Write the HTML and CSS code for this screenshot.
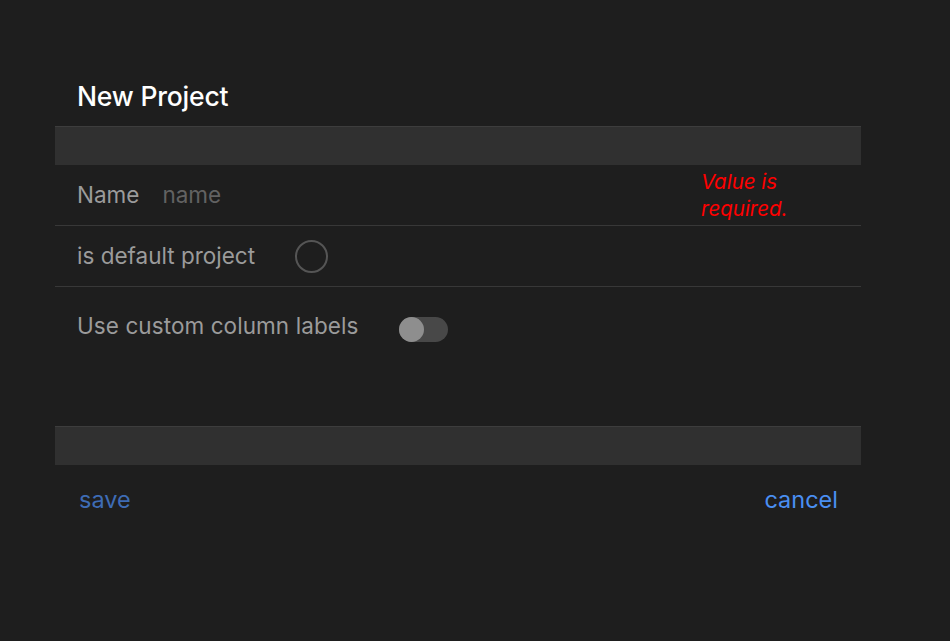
FILE: index.html
```html
<!DOCTYPE html>
<html>
<head>
<meta charset="utf-8">
<link rel="stylesheet" href="styles.css">
</head>
<body>
<div class="dialog">
  <h1 class="title">New Project</h1>
  <div class="bar"></div>
  <div class="row row-name">
    <span class="label">Name</span>
    <span class="placeholder">name</span>
    <span class="error">Value is<br>required.</span>
  </div>
  <div class="row">
    <span class="label">is default project</span>
    <span class="radio"></span>
  </div>
  <div class="row row-last">
    <span class="label">Use custom column labels</span>
    <span class="toggle"><span class="knob"></span></span>
  </div>
  <div class="bar"></div>
  <div class="actions">
    <span class="save">save</span>
    <span class="cancel">cancel</span>
  </div>
</div>
</body>
</html>
```
FILE: styles.css
```css
html, body {
  margin: 0;
  padding: 0;
  background: #1e1e1e;
  height: 100%;
}
body {
  font-family: Inter, "Liberation Sans", Arial, sans-serif;
}
.dialog {
  width: 806px;
  margin-left: 55px;
  padding-top: 79px;
}
.title {
  margin: 0;
  padding-left: 22px;
  height: 47px;
  font-size: 26.5px;
  font-weight: 500;
  color: #ffffff;
  line-height: 34px;
  letter-spacing: -0.2px;
}
.bar {
  height: 38px;
  background: #303030;
  border-top: 1px solid #3d3d3d;
}
.row {
  height: 60px;
  border-bottom: 1px solid #383838;
  display: flex;
  align-items: center;
  padding-left: 22px;
  position: relative;
}
.label {
  font-size: 22.5px;
  color: #9b9b9b;
  line-height: 26px;
}
.row-name .placeholder {
  margin-left: 23px;
  font-size: 22.5px;
  color: #626262;
  line-height: 26px;
}
.row-name .error {
  margin-left: auto;
  margin-right: 60px;
  width: 100px;
  color: #ff0000;
  font-style: italic;
  font-size: 20.5px;
  line-height: 27px;
  align-self: flex-start;
  padding-top: 3px;
}
.radio {
  margin-left: 40px;
  width: 29px;
  height: 29px;
  border: 2px solid #555555;
  border-radius: 50%;
}
.row-last {
  border-bottom: none;
  height: 139px;
  align-items: flex-start;
  padding-top: 0;
}
.row-last .label {
  margin-top: 26px;
  letter-spacing: 0.08px;
}
.toggle {
  margin-top: 30px;
  margin-left: 41px;
  width: 49px;
  height: 25px;
  border-radius: 13px;
  background: #484848;
  position: relative;
}
.knob {
  position: absolute;
  left: 0;
  top: 0;
  width: 25px;
  height: 25px;
  border-radius: 50%;
  background: #8e8e8e;
}
.actions {
  display: flex;
  justify-content: space-between;
  padding: 20px 23px 0 24px;
  font-size: 23.5px;
}
.save {
  color: #3e6cb5;
}
.cancel {
  color: #4a8ff2;
}
```
